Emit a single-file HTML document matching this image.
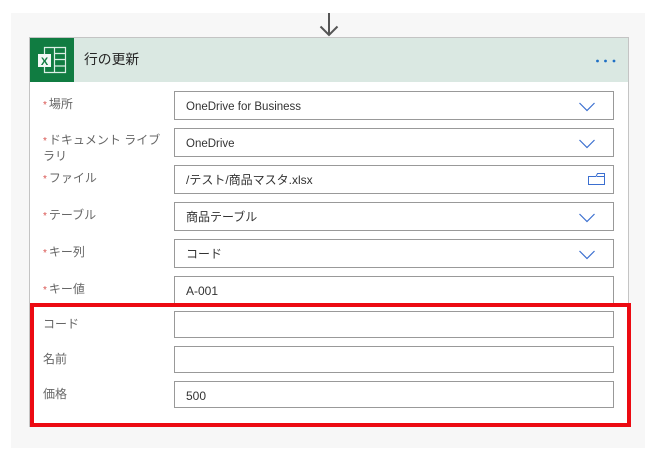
<!DOCTYPE html>
<html lang="ja">
<head>
<meta charset="utf-8">
<style>
html,body{margin:0;padding:0;background:#fff}
body{position:relative;width:661px;height:466px;overflow:hidden;font-family:"Liberation Sans","Noto Sans CJK JP",sans-serif}
.abs,.lb,.in{position:absolute;box-sizing:border-box}
.bg{left:11px;top:13px;width:634px;height:435px;background:#f7f7f7}
.card{left:29px;top:37px;width:600px;height:390px;background:#fff;border:1px solid #c4c4c4;border-bottom:0}
.hd{left:30px;top:38px;width:598px;height:44px;background:#dae8e2}
.ic{left:30px;top:38px;width:44px;height:44px;background:#107c41}
.title{left:84px;top:50px;font-size:13.800px;line-height:20px;color:#252525}
.lb{left:43px;width:122px;font-size:12px;line-height:16px;color:#666}
.lb i{font-style:normal;color:#d9534f;font-size:10px;margin-right:2px}
.in{left:174px;width:440px;height:29px;border:1px solid #999;background:#fff;font-size:12px;line-height:29px;padding-left:11px;color:#333}
.in.s{height:27px;line-height:28px}
.in .t{font-size:11.500px}
.in svg{position:absolute;right:18px;top:10px}
.red{left:30px;top:303px;width:601px;height:124px;border:4px solid #ec0a12}
</style>
</head>
<body>
<div class="abs bg"></div>
<svg class="abs" style="left:318px;top:13px" width="22" height="25" viewBox="0 0 22 25"><path d="M11 0V22M2.500 13.500L11 22L19.500 13.500" fill="none" stroke="#555" stroke-width="2"/></svg>
<div class="abs card"></div>
<div class="abs hd"></div>
<div class="abs ic">
<svg width="44" height="44" viewBox="0 0 44 44">
<path d="M14.500 9.500H35.500V34.500H14.500Z" fill="none" stroke="#dcefe5" stroke-width="1.200"/>
<path d="M24.500 9.500V34.500M24.500 15.500H35.500M24.500 21.500H35.500M24.500 28H35.500" fill="none" stroke="#dcefe5" stroke-width="1.200"/>
<rect x="8" y="16" width="13" height="13" fill="#f4f8f6"/>
<text x="14.500" y="27" font-family="Liberation Sans" font-size="11" font-weight="bold" fill="#107c41" text-anchor="middle">X</text>
</svg>
</div>
<div class="abs title">行の更新</div>
<svg class="abs" style="left:594px;top:58px" width="24" height="6" viewBox="0 0 24 6"><circle cx="3.500" cy="3" r="1.400" fill="#1e6fc4"/><circle cx="11.500" cy="3" r="1.400" fill="#1e6fc4"/><circle cx="20" cy="3" r="1.400" fill="#1e6fc4"/></svg>

<div class="lb" style="top:96px"><i>*</i>場所</div>
<div class="in" style="top:91px"><span class="t">OneDrive for Business</span><svg width="16" height="10" viewBox="0 0 16 10"><path d="M.5 1L8 8.500L15.500 1" fill="none" stroke="#3b6fd0" stroke-width="1.200"/></svg></div>

<div class="lb" style="top:133px;line-height:15px"><i>*</i>ドキュメント ライブラリ</div>
<div class="in" style="top:128px"><span class="t">OneDrive</span><svg width="16" height="10" viewBox="0 0 16 10"><path d="M.5 1L8 8.500L15.500 1" fill="none" stroke="#3b6fd0" stroke-width="1.200"/></svg></div>

<div class="lb" style="top:170px"><i>*</i>ファイル</div>
<div class="in" style="top:165px">/テスト/商品マスタ.xlsx<svg style="right:8px;top:7px" width="17" height="12" viewBox="0 0 17 12"><path d="M.5 3.500H8L9.500 .5H16.500V11.500H.5ZM9 3.500H16.500" fill="none" stroke="#3b6fd0" stroke-width="1"/></svg></div>

<div class="lb" style="top:207px"><i>*</i>テーブル</div>
<div class="in" style="top:202px">商品テーブル<svg width="16" height="10" viewBox="0 0 16 10"><path d="M.5 1L8 8.500L15.500 1" fill="none" stroke="#3b6fd0" stroke-width="1.200"/></svg></div>

<div class="lb" style="top:244px"><i>*</i>キー列</div>
<div class="in" style="top:239px">コード<svg width="16" height="10" viewBox="0 0 16 10"><path d="M.5 1L8 8.500L15.500 1" fill="none" stroke="#3b6fd0" stroke-width="1.200"/></svg></div>

<div class="lb" style="top:281px"><i>*</i>キー値</div>
<div class="in" style="top:276px">A-001</div>

<div class="lb" style="top:316px">コード</div>
<div class="in s" style="top:311px"></div>
<div class="lb" style="top:351px">名前</div>
<div class="in s" style="top:346px"></div>
<div class="lb" style="top:386px">価格</div>
<div class="in s" style="top:381px">500</div>

<div class="abs red"></div>
</body>
</html>
